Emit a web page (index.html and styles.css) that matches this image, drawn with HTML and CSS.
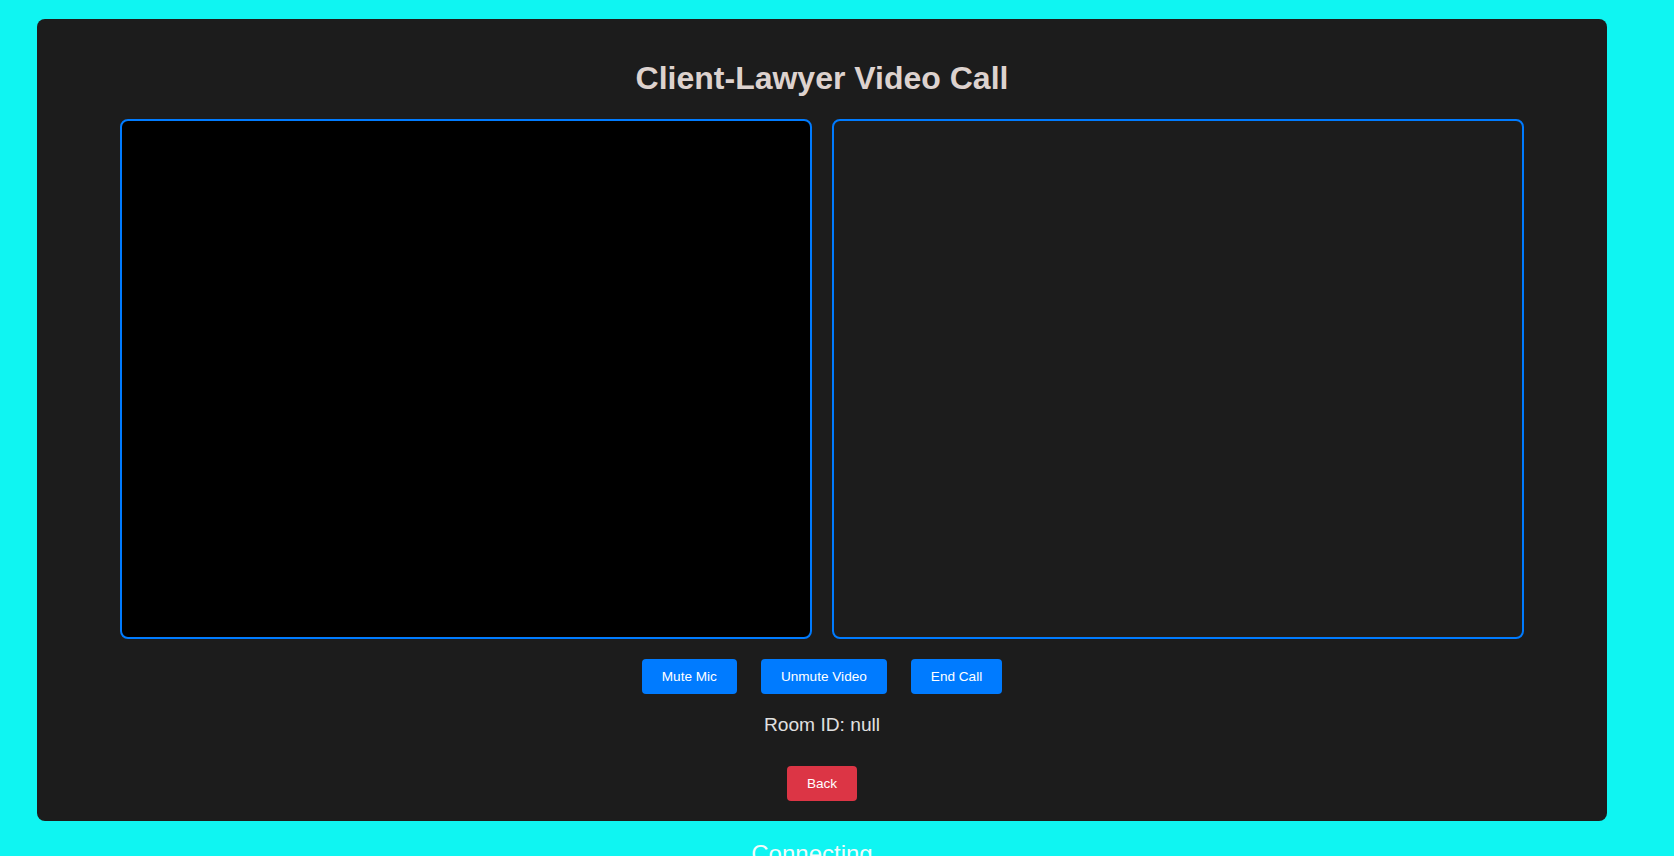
FILE: index.html
```html
<!DOCTYPE html>
<html>
<head>
<meta charset="utf-8">
<link rel="stylesheet" href="styles.css">
</head>
<body>
<div class="page">
  <div class="call-card">
    <h1 class="title">Client-Lawyer Video Call</h1>
    <div class="videos">
      <div class="video local"></div>
      <div class="video remote"></div>
    </div>
    <div class="controls">
      <button class="btn btn-blue">Mute Mic</button>
      <button class="btn btn-blue">Unmute Video</button>
      <button class="btn btn-blue">End Call</button>
    </div>
    <p class="room">Room ID: null</p>
    <div class="back-row">
      <button class="btn btn-red">Back</button>
    </div>
  </div>
  <p class="status">Connecting...</p>
</div>
</body>
</html>
```
FILE: styles.css
```css
html, body {
  margin: 0;
  padding: 0;
}
body {
  background: #0ff5f2;
  font-family: "Liberation Sans", Arial, sans-serif;
  height: 856px;
  overflow: hidden;
}
.page {
  width: 1570px;
  margin-left: 37px;
  padding-top: 19px;
}
.call-card {
  background: #1c1c1c;
  border-radius: 8px;
  padding: 20px 0 20px;
  display: flex;
  flex-direction: column;
  align-items: center;
}
.title {
  margin: 21px 0 22px;
  font-size: 32px;
  font-weight: bold;
  color: #ddd2ce;
  line-height: 37px;
}
.videos {
  display: flex;
  gap: 20px;
}
.video {
  width: 692px;
  height: 520px;
  box-sizing: border-box;
  border: 2px solid #007bff;
  border-radius: 8px;
}
.local {
  background: #000;
}
.remote {
  background: #1c1c1c;
}
.controls {
  display: flex;
  gap: 24px;
  margin-top: 20px;
}
.btn {
  font-family: "Liberation Sans", Arial, sans-serif;
  font-size: 13.6px;
  color: #fff;
  border: none;
  border-radius: 4px;
  padding: 0 20px;
  height: 35px;
  cursor: pointer;
}
.btn-blue {
  background: #007bff;
}
.btn-red {
  background: #dc3545;
}
.room {
  margin: 20px 0 0;
  font-size: 19.2px;
  line-height: 22px;
  color: #e0e0e0;
}
.back-row {
  margin-top: 30px;
}
.status {
  margin: 19px 0 0;
  text-align: center;
  font-size: 24px;
  color: #f4fbfb;
}
```
